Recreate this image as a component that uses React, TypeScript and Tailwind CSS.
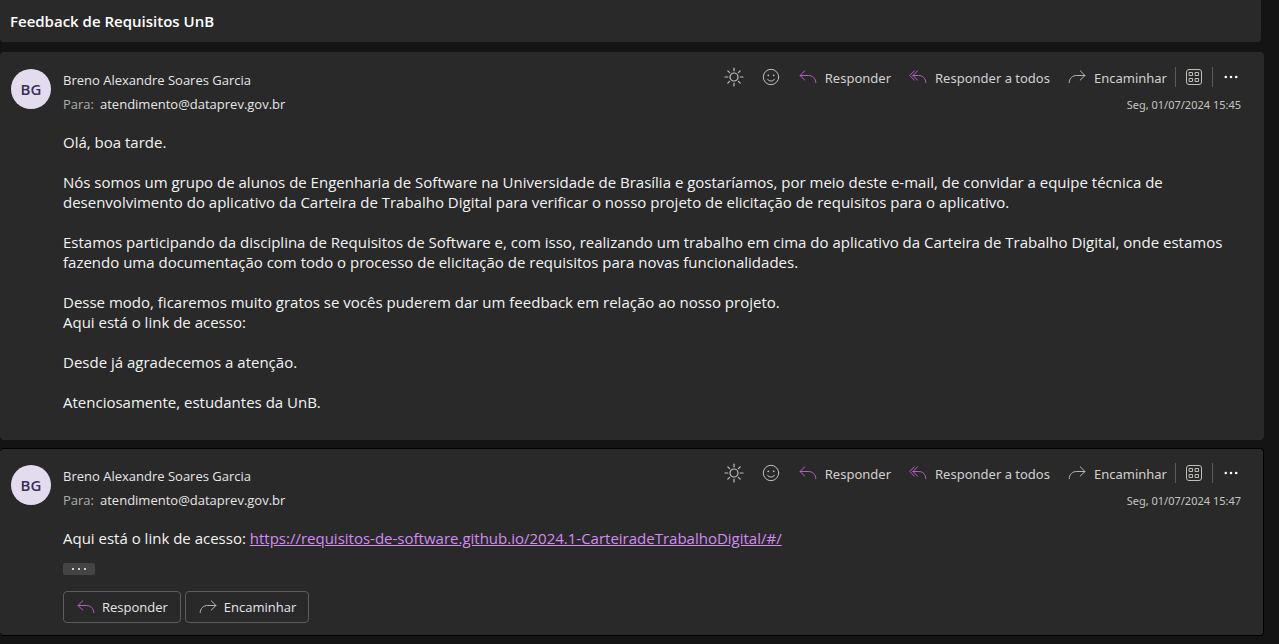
import type { ReactNode } from "react";

type IconProps = { className?: string };

function Svg({ className = "", children }: IconProps & { children: ReactNode }) {
  return (
    <svg
      viewBox="0 0 20 20"
      className={`size-5 shrink-0 ${className}`}
      fill="none"
      stroke="currentColor"
      strokeWidth="1"
      strokeLinecap="round"
      strokeLinejoin="round"
      aria-hidden="true"
    >
      {children}
    </svg>
  );
}

function SunIcon() {
  return (
    <Svg className="text-[#c0bebb]">
      <circle cx="10" cy="10" r="4" strokeWidth="1.2" />
      <path
        strokeWidth="1.2"
        d="M10 1v2.8M10 16.2V19M1 10h2.8M16.2 10H19M3.8 3.8l1.8 1.8M14.4 14.4l1.8 1.8M3.8 16.2l1.8-1.8M14.4 5.6l1.8-1.8"
      />
    </Svg>
  );
}

function SmileIcon() {
  return (
    <Svg className="text-[#c0bebb]">
      <circle cx="10" cy="10" r="7.7" />
      <path d="M6.5 12.2c1.6 2.6 5.4 2.6 7 0" />
      <circle cx="7.3" cy="8.3" r="0.9" fill="currentColor" stroke="none" />
      <circle cx="12.7" cy="8.3" r="0.9" fill="currentColor" stroke="none" />
    </Svg>
  );
}

function ReplyIcon() {
  return (
    <Svg className="text-[#b65fc4]">
      <path d="M6.8 3.8L2 8.5l4.8 4.6M2 8.5h8.2c4.6 0 7.6 3 7.6 7.2" />
    </Svg>
  );
}

function ReplyAllIcon() {
  return (
    <Svg className="text-[#b65fc4]">
      <path d="M6.3 3.8L1.8 8.5l4.5 4.6M9.5 3.8L5 8.5l4.5 4.6M5 8.5h5.6c4.4 0 7.2 3 7.2 7.2" />
    </Svg>
  );
}

function ForwardIcon() {
  return (
    <Svg className="text-[#b5b5b5]">
      <path d="M13.2 3.8L18 8.5l-4.8 4.6M18 8.5H9.8c-4.6 0-7.6 3-7.6 7.2" />
    </Svg>
  );
}

function AppsIcon() {
  return (
    <Svg className="text-[#c0bebb]">
      <rect x="2.5" y="2.5" width="15" height="15" rx="2.5" />
      <path d="M5.5 5.5h3v3h-3zM11.5 5.5h3v3h-3zM5.5 11.5h3v3h-3zM11.5 11.5h3v3h-3z" />
    </Svg>
  );
}

function MoreIcon() {
  return (
    <Svg className="text-white">
      <g fill="currentColor" stroke="none">
        <circle cx="4.8" cy="10" r="1.3" />
        <circle cx="10" cy="10" r="1.3" />
        <circle cx="15.2" cy="10" r="1.3" />
      </g>
    </Svg>
  );
}

function Action({ icon, label }: { icon: ReactNode; label: string }) {
  return (
    <button type="button" className="flex items-center gap-[7px] whitespace-nowrap">
      {icon}
      <span className="pt-px">{label}</span>
    </button>
  );
}

function Toolbar() {
  return (
    <div className="flex h-5 items-center gap-[17px] font-['Noto_Sans',sans-serif] text-[13px] leading-5 text-[#d2d0ce]">
      <button type="button" aria-label="Modo claro">
        <SunIcon />
      </button>
      <button type="button" aria-label="Reagir">
        <SmileIcon />
      </button>
      <Action icon={<ReplyIcon />} label="Responder" />
      <Action icon={<ReplyAllIcon />} label="Responder a todos" />
      <Action icon={<ForwardIcon />} label="Encaminhar" />
      <div className="-ml-[9px] flex items-center gap-2">
        <span className="h-5 w-px bg-[#5a5a5a]" />
        <button type="button" aria-label="Aplicativos">
          <AppsIcon />
        </button>
        <span className="h-5 w-px bg-[#5a5a5a]" />
        <button type="button" aria-label="Mais ações">
          <MoreIcon />
        </button>
      </div>
    </div>
  );
}

type MessageProps = { time: string; className: string; children: ReactNode };

function Message({ time, className, children }: MessageProps) {
  return (
    <article className={`mr-[15px] flex gap-3 rounded bg-[#292929] pl-[11px] ${className}`}>
      <div className="mt-0.5 flex size-10 shrink-0 items-center justify-center rounded-full bg-[#e3dcee] text-[15px] font-semibold text-[#3b2e58]">
        BG
      </div>
      <div className="min-w-0 flex-1">
        <header className="flex items-start justify-between gap-4">
          <div className="pt-px text-[13px] leading-6 text-[#e6e6e6]">
            <h2>Breno Alexandre Soares Garcia</h2>
            <p>
              <span className="mr-1.5 text-[#adadad]">Para:</span>
              atendimento@dataprev.gov.br
            </p>
          </div>
          <div className="flex flex-col items-end">
            <Toolbar />
            <time className="mt-2 font-['Noto_Sans',sans-serif] text-[11px] leading-5 text-[#c4c4c4]">{time}</time>
          </div>
        </header>
        <div className="mt-4 font-['Open_Sans',sans-serif] text-[15px] leading-5 text-[#f3f3f3]">
          {children}
        </div>
      </div>
    </article>
  );
}

const outlined =
  "flex h-8 items-center gap-1.5 rounded-[4px] border border-[#5c5c5c] px-3 text-[13px] text-[#e6e6e6]";

export default function App() {
  return (
    <main className="min-h-screen bg-[#141414] font-['Open_Sans',sans-serif]">
      <header className="mr-[18px] rounded-b bg-[#292929] px-[10px] py-[9px]">
        <h1 className="text-[15px] leading-6 font-semibold text-white">Feedback de Requisitos UnB</h1>
      </header>

      <Message time="Seg, 01/07/2024 15:45" className="mt-[10px] pt-[15px] pr-[23px] pb-7">
        <div className="space-y-5">
          <p>Olá, boa tarde.</p>
          <p>
            Nós somos um grupo de alunos de Engenharia de Software na Universidade de Brasília e gostaríamos, por meio
            deste e-mail, de convidar a equipe técnica de desenvolvimento do aplicativo da Carteira de Trabalho Digital
            para verificar o nosso projeto de elicitação de requisitos para o aplicativo.
          </p>
          <p>
            Estamos participando da disciplina de Requisitos de Software e, com isso, realizando um trabalho em cima do
            aplicativo da Carteira de Trabalho Digital, onde estamos fazendo uma documentação com todo o processo de
            elicitação de requisitos para novas funcionalidades.
          </p>
          <p>
            Desse modo, ficaremos muito gratos se vocês puderem dar um feedback em relação ao nosso projeto.
            <br />
            Aqui está o link de acesso:
          </p>
          <p>Desde já agradecemos a atenção.</p>
          <p>Atenciosamente, estudantes da UnB.</p>
        </div>
      </Message>

      <Message
        time="Seg, 01/07/2024 15:47"
        className="mt-2 border border-l-0 border-black pt-[14px] pr-[22px] pb-3"
      >
        <p>
          Aqui está o link de acesso:{" "}
          <a
            href="https://requisitos-de-software.github.io/2024.1-CarteiradeTrabalhoDigital/#/"
            className="text-[#d28cf0] underline"
          >
            https://requisitos-de-software.github.io/2024.1-CarteiradeTrabalhoDigital/#/
          </a>
        </p>
        <button
          type="button"
          aria-label="Mostrar histórico"
          className="mt-[15px] flex h-3 w-8 items-center justify-center gap-1 rounded-[2px] bg-[#444444]"
        >
          <span className="size-0.5 bg-[#d0d0d0]" />
          <span className="size-0.5 bg-[#d0d0d0]" />
          <span className="size-0.5 bg-[#d0d0d0]" />
        </button>
        <div className="mt-4 flex gap-1 font-['Open_Sans',sans-serif]">
          <button type="button" className={outlined}>
            <ReplyIcon />
            Responder
          </button>
          <button type="button" className={outlined}>
            <ForwardIcon />
            Encaminhar
          </button>
        </div>
      </Message>
    </main>
  );
}
